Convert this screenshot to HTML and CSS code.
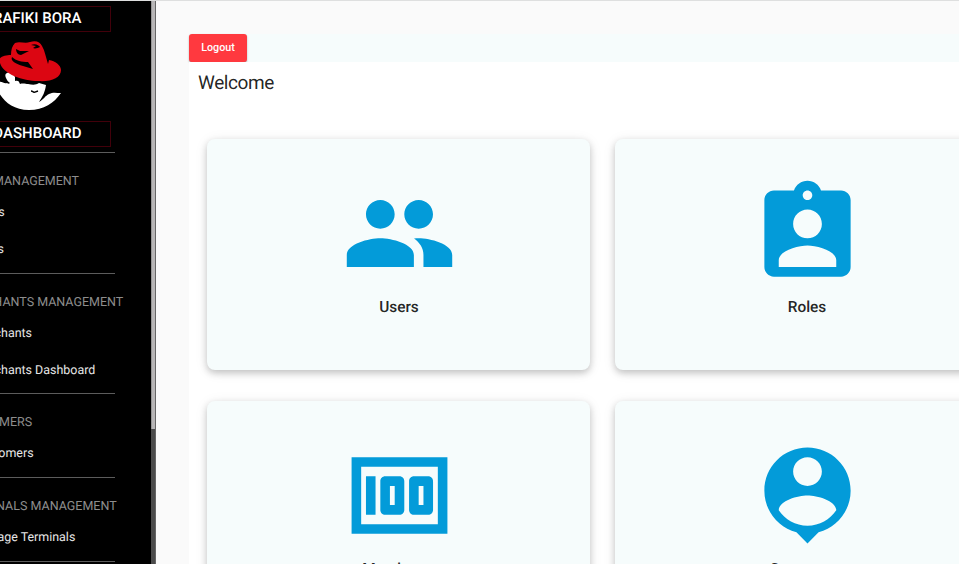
FILE: index.html
```
<!DOCTYPE html>
<html lang="en">
<head>
<meta charset="utf-8">
<title>Rafiki Bora Dashboard</title>
<link rel="stylesheet" href="styles.css">
</head>
<body>
<div class="app">
  <aside class="sidebar">
    <div class="sidebar-inner">
      <div class="brand">RAFIKI BORA</div>
      <svg class="logo" viewBox="0 0 75 76">
        <path fill="#fff" d="M21 36c3-2 6 0 8 4l0 4c3-1 4 0 5 3 3-1 6 0 8 0 5 1 8 1 11-1l7 2c-1 7-3 11-7 17 5-3 6-6 10-8 4-2 7-1 12-1C68 66 58 73 43 73 27 73 17 64 12 54c-3-5-3-9 1-9 3-1 5 2 8 1 1 1 2 1 3 0-2-1-3-3-4-5-1-2-1-4 1-5z"/>
        <path fill="none" stroke="#000" stroke-width="1.4" d="M45 54c2 0 3 2 4 1l3-1"/>
        <path fill="#dc0612" d="M29 6c5-2 10 1 15-1 6-2 10 0 12 4 3 5 4 12 6 18l1-4c6 1 12 5 12 10 0 8-10 12-23 11C37 44 17 37 14 26c-4-5 4-8 11-8 0-5 1-9 4-12z"/>
        <path fill="#000" d="M26 20c-2 4 4 7 11 9l10 3-5-7c-6 0-12-1-16-5zM30 12l4 2 9 0-8 4c-3 0-5-3-5-6zM45 8c4-2 8 0 9 2-2 1-5 2-7 1l3-2z"/>
      </svg>
      <div class="brand brand-second">DASHBOARD</div>
      <nav class="nav">
        <section class="group">
          <h2>USER MANAGEMENT</h2>
          <a>Users</a>
          <a>Roles</a>
        </section>
        <section class="group">
          <h2>MERCHANTS MANAGEMENT</h2>
          <a>Merchants</a>
          <a>Merchants Dashboard</a>
        </section>
        <section class="group">
          <h2>CUSTOMERS</h2>
          <a>Customers</a>
        </section>
        <section class="group">
          <h2>TERMINALS MANAGEMENT</h2>
          <a>Manage Terminals</a>
        </section>
        <section class="group"></section>
      </nav>
    </div>
    <div class="scrollbar"><div class="thumb"></div></div>
  </aside>
  <main class="main">
    <div class="toolbar"><button class="logout">Logout</button></div>
    <div class="panel">
      <h1>Welcome</h1>
      <div class="cards">
        <div class="card">
          <svg viewBox="0 0 24 24"><path d="M16 11c1.66 0 2.99-1.34 2.99-3S17.66 5 16 5c-1.66 0-3 1.34-3 3s1.34 3 3 3zm-8 0c1.66 0 2.99-1.34 2.99-3S9.66 5 8 5C6.34 5 5 6.34 5 8s1.34 3 3 3zm0 2c-2.33 0-7 1.17-7 3.5V19h14v-2.5c0-2.33-4.67-3.5-7-3.5zm8 0c-.29 0-.62.02-.97.05 1.16.84 1.97 1.97 1.97 3.45V19h6v-2.5c0-2.33-4.67-3.5-7-3.5z"/></svg>
          <span>Users</span>
        </div>
        <div class="card">
          <svg viewBox="0 0 24 24"><path d="M19 3h-4.180C14.400 1.840 13.300 1 12 1c-1.300 0-2.400.84-2.820 2H5c-1.100 0-2 .9-2 2v14c0 1.100.9 2 2 2h14c1.100 0 2-.9 2-2V5c0-1.100-.9-2-2-2zm-7 0c.55 0 1 .45 1 1s-.45 1-1 1-1-.45-1-1 .45-1 1-1zm0 4c1.660 0 3 1.340 3 3s-1.340 3-3 3-3-1.340-3-3 1.340-3 3-3zm6 12H6v-1.400c0-2 4-3.100 6-3.100s6 1.100 6 3.100V19z"/></svg>
          <span>Roles</span>
        </div>
        <div class="card">
          <svg viewBox="0 0 24 24"><path fill-rule="evenodd" d="M2 4h20v16H2zM4 6v12h16V6zM5 8h2v8H5zM9 8h3c.55 0 1 .45 1 1v6c0 .55-.45 1-1 1H9c-.55 0-1-.45-1-1V9c0-.55.45-1 1-1zm1 2v4h1v-4zM15 8h3c.55 0 1 .45 1 1v6c0 .55-.45 1-1 1h-3c-.55 0-1-.45-1-1V9c0-.55.45-1 1-1zm1 2v4h1v-4z"/></svg>
          <span>Merchants</span>
        </div>
        <div class="card">
          <svg viewBox="0 0 24 24"><path d="M12 2c-4.970 0-9 4.030-9 9 0 4.170 2.840 7.670 6.690 8.690L12 22l2.310-2.310C18.160 18.670 21 15.170 21 11c0-4.970-4.030-9-9-9zm0 2c1.660 0 3 1.340 3 3s-1.340 3-3 3-3-1.340-3-3 1.340-3 3-3zm0 14.300c-2.500 0-4.710-1.280-6-3.220.03-1.990 4-3.080 6-3.080 1.990 0 5.970 1.090 6 3.080-1.290 1.940-3.500 3.220-6 3.220z"/></svg>
          <span>Customers</span>
        </div>
      </div>
    </div>
  </main>
</div>
</body>
</html>
```
FILE: styles.css
```
* { box-sizing: border-box; }
body {
  margin: 0;
  height: 564px;
  overflow: hidden;
  background: #fafafa;
  font-family: Roboto, "Liberation Sans", sans-serif;
  color: rgba(0, 0, 0, .87);
  text-rendering: geometricPrecision;
}
.app {
  display: flex;
  height: 564px;
  border-top: 1px solid #dedfdf;
  overflow: hidden;
}
.sidebar {
  flex: none;
  display: flex;
  justify-content: space-between;
  width: 156px;
  background: #000;
  overflow: hidden;
}
.sidebar-inner {
  flex: none;
  width: 165px;
  margin-left: -50px;
  padding-top: 5px;
}
.brand {
  width: 161px;
  height: 26px;
  padding-right: 28.5px;
  border: 1px solid #42000a;
  color: #fff;
  font-size: 15px;
  font-weight: 500;
  line-height: 22px;
  text-align: right;
  white-space: nowrap;
}
.logo {
  display: block;
  width: 75px;
  height: 76px;
  margin: 5px 0 0 36px;
}
.brand-second { margin-top: 8px; }
.nav { margin-top: 5.3px; }
.group {
  border-top: 1px solid #5c5c5c;
  padding: 18px 0 6px 22px;
}
.group h2 {
  margin: 0 0 2px -12.5px;
  color: #8d8d8d;
  font-size: 12.5px;
  font-weight: 400;
  line-height: 22px;
  height: 20px;
  white-space: nowrap;
}
.group a {
  display: block;
  height: 36.8px;
  padding-left: 1px;
  color: #e6e6e6;
  font-size: 12.45px;
  line-height: 40px;
  white-space: nowrap;
}
.scrollbar {
  flex: none;
  width: 5px;
  background: #4b4b4b;
  border-right: 1px solid #666;
}
.thumb {
  height: 428px;
  background: #b8b6b7;
  border-left: 1px solid #969696;
}
.main {
  flex: 1;
  min-width: 0;
  padding: 33px 0 0 33px;
}
.toolbar {
  height: 28px;
  background: #f6fcfc;
}
.logout {
  display: block;
  width: 58px;
  height: 28px;
  padding: 0;
  border: 0;
  border-radius: 3px;
  background: #ff393f;
  box-shadow: 0 2px 1px -1px rgba(0,0,0,.2), 0 1px 2px rgba(0,0,0,.3);
  color: #fff;
  font: 500 10.7px/26px Roboto, sans-serif;
}
.panel {
  height: 600px;
  padding: 8px 0 0 9px;
  background: #fff;
}
.panel h1 {
  margin: 0;
  font-size: 19px;
  font-weight: 400;
  line-height: 26px;
  letter-spacing: -.4px;
}
.cards {
  display: grid;
  grid-template-columns: 383px 383px;
  grid-auto-rows: 231px;
  gap: 31px 25px;
  margin: 43px 0 0 9px;
}
.card {
  display: flex;
  flex-direction: column;
  align-items: center;
  padding: 37.4px 0 0 1px;
  border-radius: 8px;
  background: #f6fcfc;
  box-shadow: 0 3px 7px rgba(0,0,0,.2), 0 2px 14px rgba(0,0,0,.08);
  font-size: 15.4px;
  font-weight: 500;
  line-height: 20px;
}
.card svg {
  width: 115px;
  height: 115px;
  fill: #039bd9;
}
.card span { margin-top: 6px; }
```
